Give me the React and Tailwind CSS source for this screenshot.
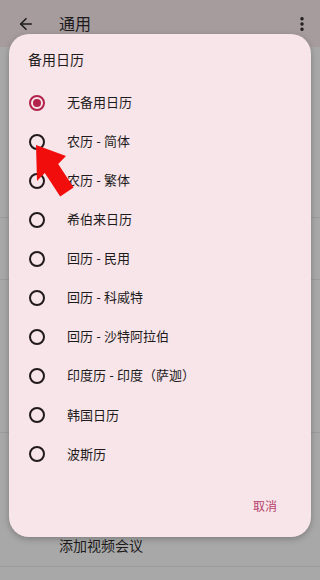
import { ArrowLeft, EllipsisVertical } from "lucide-react";

const options = [
  "无备用日历",
  "农历 - 简体",
  "农历 - 繁体",
  "希伯来日历",
  "回历 - 民用",
  "回历 - 科威特",
  "回历 - 沙特阿拉伯",
  "印度历 - 印度（萨迦）",
  "韩国日历",
  "波斯历",
];

function Radio({ checked }) {
  if (checked) {
    return (
      <span className="w-[16px] h-[16px] rounded-full border-2 border-[#b3224a] flex items-center justify-center shrink-0">
        <span className="w-[8px] h-[8px] rounded-full bg-[#b3224a]" />
      </span>
    );
  }
  return <span className="w-[16px] h-[16px] rounded-full border-2 border-[#211a1c] shrink-0" />;
}

export default function App() {
  return (
    <div
      className="relative w-[320px] h-[580px] overflow-hidden bg-[#a8a8a8] text-[#1d1b1c]"
      style={{ fontFamily: '"Noto Sans", "Noto Sans CJK SC", sans-serif' }}
    >
      {/* page behind the scrim */}
      <div className="h-[47px] bg-[#a69c9e] flex items-center px-[17px]">
        <ArrowLeft size={18} strokeWidth={2.2} className="text-[#1d1b1c]" />
        <span className="ml-[24px] text-[16px]">通用</span>
        <EllipsisVertical size={18} strokeWidth={2.6} className="ml-auto -mr-[8px] text-[#1d1b1c]" />
      </div>
      <div className="h-[171px] border-b border-[#9b9b9b]" />
      <div className="h-[62px] border-b border-[#9b9b9b]" />
      <div className="h-[153px] border-b border-[#9b9b9b]" />
      <div className="h-[134px] border-b border-[#9b9b9b] flex items-end pl-[59px] pb-[10px]">
        <span className="text-[14px]">添加视频会议</span>
      </div>

      {/* dialog */}
      <div className="absolute left-[9px] top-[34px] w-[302px] h-[503px] rounded-[20px] bg-[#f8e5e9] shadow-[0_2px_6px_rgba(0,0,0,0.25)] flex flex-col">
        <div className="pt-[16px] pl-[19px] text-[14px] leading-[20px]">备用日历</div>
        <div className="mt-[13px] flex flex-col">
          {options.map((o, i) => (
            <div key={o} className="h-[39.1px] flex items-center pl-[20px] gap-[22px]">
              <Radio checked={i === 0} />
              <span className="text-[13px]">{o}</span>
            </div>
          ))}
        </div>
        <div className="mt-[24px] flex justify-end pr-[34px]">
          <span className="text-[12px] text-[#b5426b]">取消</span>
        </div>
      </div>

      {/* red arrow annotation */}
      <svg className="absolute left-0 top-0" width="320" height="580" viewBox="0 0 320 580">
        <polygon
          points="36,145 66,156 58.2,164.1 73.6,187.6 60.2,196.4 44.8,172.9 37,181"
          fill="#f20d0d"
        />
      </svg>
    </div>
  );
}
